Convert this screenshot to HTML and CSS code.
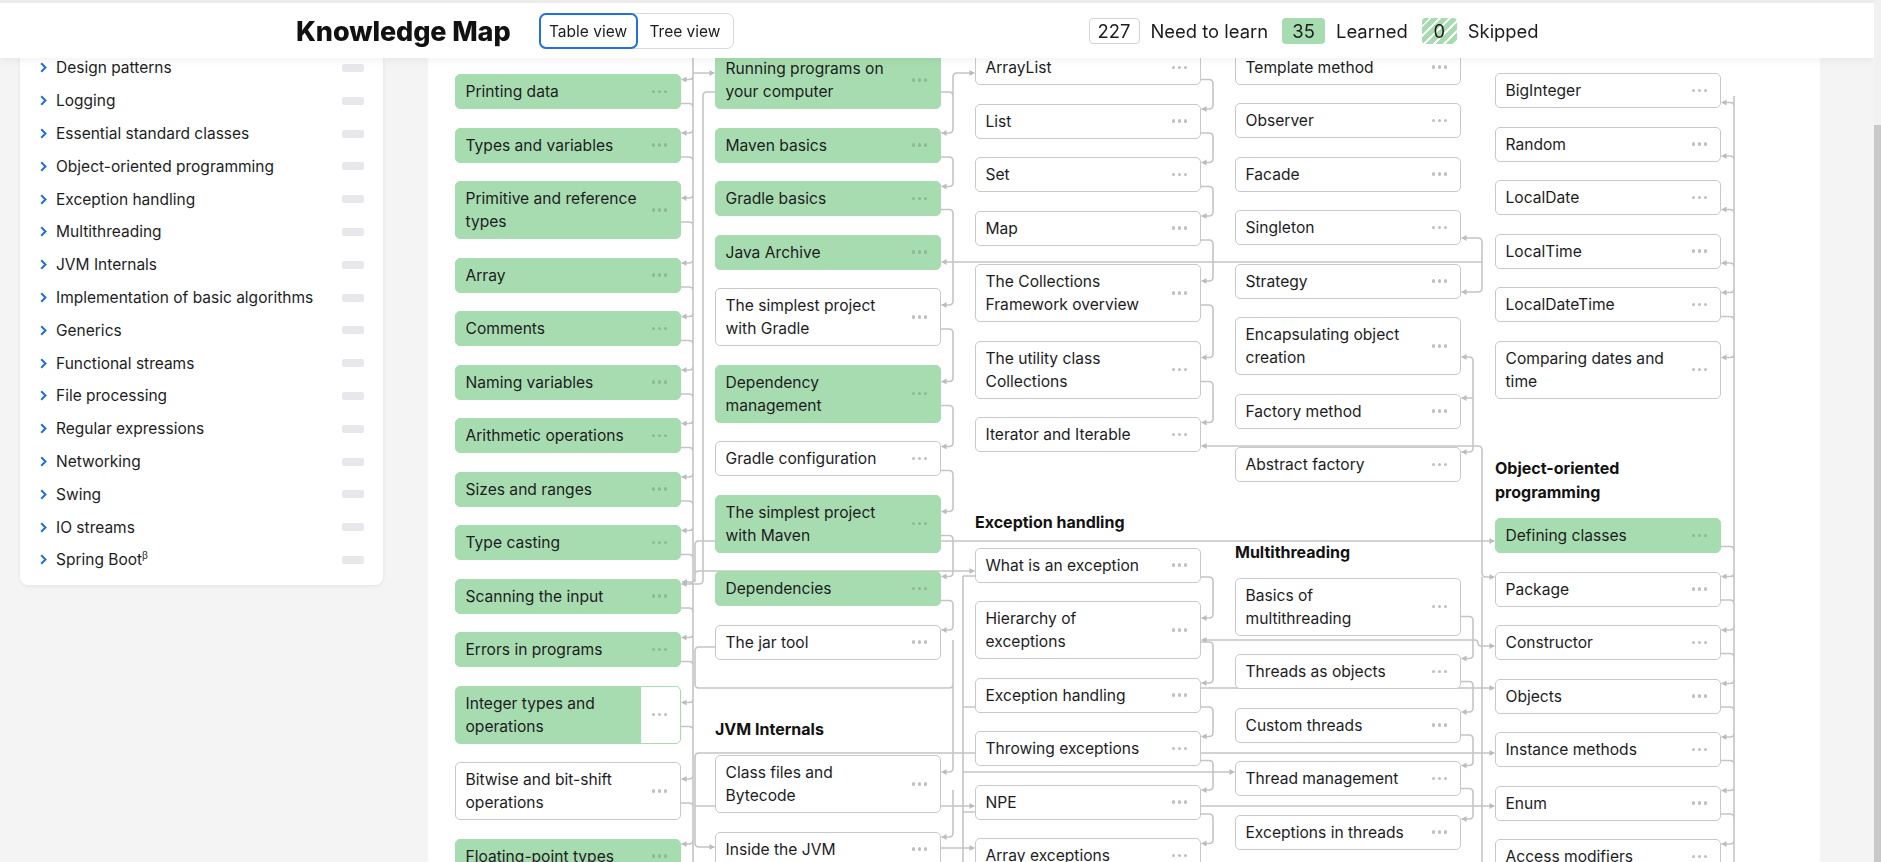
FILE: index.html
```html
<!DOCTYPE html>
<html lang="en">
<head>
<meta charset="utf-8">
<title>Knowledge Map</title>
<link rel="stylesheet" href="styles.css">
</head>
<body>
<header class="topbar">
  <h1 class="title">Knowledge Map</h1>
  <div class="view-toggle">
    <button class="toggle-btn is-active">Table view</button>
    <button class="toggle-btn">Tree view</button>
  </div>
  <div class="stats">
    <span class="stat"><span class="badge badge-todo">227</span>Need to learn</span>
    <span class="stat"><span class="badge badge-learned">35</span>Learned</span>
    <span class="stat"><span class="badge badge-skipped">0</span>Skipped</span>
  </div>
</header>

<div class="scrollbar"><div class="scrollbar-thumb"></div></div>

<div class="page">
  <aside class="sidebar">
    <ul class="topic-list">
      <li class="topic"><svg class="chev" viewBox="0 0 7 11"><path d="M1.2 1.2 5.5 5.5 1.2 9.8"/></svg><span class="topic-name">Design patterns</span><span class="topic-bar"></span></li>
      <li class="topic"><svg class="chev" viewBox="0 0 7 11"><path d="M1.2 1.2 5.5 5.5 1.2 9.8"/></svg><span class="topic-name">Logging</span><span class="topic-bar"></span></li>
      <li class="topic"><svg class="chev" viewBox="0 0 7 11"><path d="M1.2 1.2 5.5 5.5 1.2 9.8"/></svg><span class="topic-name">Essential standard classes</span><span class="topic-bar"></span></li>
      <li class="topic"><svg class="chev" viewBox="0 0 7 11"><path d="M1.2 1.2 5.5 5.5 1.2 9.8"/></svg><span class="topic-name">Object-oriented programming</span><span class="topic-bar"></span></li>
      <li class="topic"><svg class="chev" viewBox="0 0 7 11"><path d="M1.2 1.2 5.5 5.5 1.2 9.8"/></svg><span class="topic-name">Exception handling</span><span class="topic-bar"></span></li>
      <li class="topic"><svg class="chev" viewBox="0 0 7 11"><path d="M1.2 1.2 5.5 5.5 1.2 9.8"/></svg><span class="topic-name">Multithreading</span><span class="topic-bar"></span></li>
      <li class="topic"><svg class="chev" viewBox="0 0 7 11"><path d="M1.2 1.2 5.5 5.5 1.2 9.8"/></svg><span class="topic-name">JVM Internals</span><span class="topic-bar"></span></li>
      <li class="topic"><svg class="chev" viewBox="0 0 7 11"><path d="M1.2 1.2 5.5 5.5 1.2 9.8"/></svg><span class="topic-name">Implementation of basic algorithms</span><span class="topic-bar"></span></li>
      <li class="topic"><svg class="chev" viewBox="0 0 7 11"><path d="M1.2 1.2 5.5 5.5 1.2 9.8"/></svg><span class="topic-name">Generics</span><span class="topic-bar"></span></li>
      <li class="topic"><svg class="chev" viewBox="0 0 7 11"><path d="M1.2 1.2 5.5 5.5 1.2 9.8"/></svg><span class="topic-name">Functional streams</span><span class="topic-bar"></span></li>
      <li class="topic"><svg class="chev" viewBox="0 0 7 11"><path d="M1.2 1.2 5.5 5.5 1.2 9.8"/></svg><span class="topic-name">File processing</span><span class="topic-bar"></span></li>
      <li class="topic"><svg class="chev" viewBox="0 0 7 11"><path d="M1.2 1.2 5.5 5.5 1.2 9.8"/></svg><span class="topic-name">Regular expressions</span><span class="topic-bar"></span></li>
      <li class="topic"><svg class="chev" viewBox="0 0 7 11"><path d="M1.2 1.2 5.5 5.5 1.2 9.8"/></svg><span class="topic-name">Networking</span><span class="topic-bar"></span></li>
      <li class="topic"><svg class="chev" viewBox="0 0 7 11"><path d="M1.2 1.2 5.5 5.5 1.2 9.8"/></svg><span class="topic-name">Swing</span><span class="topic-bar"></span></li>
      <li class="topic"><svg class="chev" viewBox="0 0 7 11"><path d="M1.2 1.2 5.5 5.5 1.2 9.8"/></svg><span class="topic-name">IO streams</span><span class="topic-bar"></span></li>
      <li class="topic"><svg class="chev" viewBox="0 0 7 11"><path d="M1.2 1.2 5.5 5.5 1.2 9.8"/></svg><span class="topic-name">Spring Boot<sup class="beta">β</sup></span><span class="topic-bar"></span></li>
    </ul>
  </aside>

  <main class="map-panel">
    <svg class="links" id="links" xmlns="http://www.w3.org/2000/svg"></svg>
    <div class="map">
      <div class="column col-first">
        <section class="section">
          <div class="nodes">
            <div class="node learned" id="n-printing"><span class="node-text">Printing data</span><span class="dots"><i></i><i></i><i></i></span></div>
            <div class="node learned" id="n-types"><span class="node-text">Types and variables</span><span class="dots"><i></i><i></i><i></i></span></div>
            <div class="node learned" id="n-primitive"><span class="node-text">Primitive and reference types</span><span class="dots"><i></i><i></i><i></i></span></div>
            <div class="node learned" id="n-array"><span class="node-text">Array</span><span class="dots"><i></i><i></i><i></i></span></div>
            <div class="node learned" id="n-comments"><span class="node-text">Comments</span><span class="dots"><i></i><i></i><i></i></span></div>
            <div class="node learned" id="n-naming"><span class="node-text">Naming variables</span><span class="dots"><i></i><i></i><i></i></span></div>
            <div class="node learned" id="n-arith"><span class="node-text">Arithmetic operations</span><span class="dots"><i></i><i></i><i></i></span></div>
            <div class="node learned" id="n-sizes"><span class="node-text">Sizes and ranges</span><span class="dots"><i></i><i></i><i></i></span></div>
            <div class="node learned" id="n-casting"><span class="node-text">Type casting</span><span class="dots"><i></i><i></i><i></i></span></div>
            <div class="node learned" id="n-scanning"><span class="node-text">Scanning the input</span><span class="dots"><i></i><i></i><i></i></span></div>
            <div class="node learned" id="n-errors"><span class="node-text">Errors in programs</span><span class="dots"><i></i><i></i><i></i></span></div>
            <div class="node partial" id="n-integer"><span class="node-text">Integer types and operations</span><span class="dots"><i></i><i></i><i></i></span></div>
            <div class="node" id="n-bitwise"><span class="node-text">Bitwise and bit-shift operations</span><span class="dots"><i></i><i></i><i></i></span></div>
            <div class="node learned" id="n-floating"><span class="node-text">Floating-point types</span><span class="dots"><i></i><i></i><i></i></span></div>
          </div>
        </section>
      </div>

      <div class="column col-second">
        <section class="section">
          <div class="nodes">
            <div class="node learned" id="n-running"><span class="node-text">Running programs on your computer</span><span class="dots"><i></i><i></i><i></i></span></div>
            <div class="node learned" id="n-maven"><span class="node-text">Maven basics</span><span class="dots"><i></i><i></i><i></i></span></div>
            <div class="node learned" id="n-gradlebasics"><span class="node-text">Gradle basics</span><span class="dots"><i></i><i></i><i></i></span></div>
            <div class="node learned" id="n-jararchive"><span class="node-text">Java Archive</span><span class="dots"><i></i><i></i><i></i></span></div>
            <div class="node" id="n-simplegradle"><span class="node-text">The simplest project with Gradle</span><span class="dots"><i></i><i></i><i></i></span></div>
            <div class="node learned" id="n-depmgmt"><span class="node-text">Dependency management</span><span class="dots"><i></i><i></i><i></i></span></div>
            <div class="node" id="n-gradleconf"><span class="node-text">Gradle configuration</span><span class="dots"><i></i><i></i><i></i></span></div>
            <div class="node learned" id="n-simplemaven"><span class="node-text">The simplest project with Maven</span><span class="dots"><i></i><i></i><i></i></span></div>
            <div class="node learned" id="n-dependencies"><span class="node-text">Dependencies</span><span class="dots"><i></i><i></i><i></i></span></div>
            <div class="node" id="n-jar"><span class="node-text">The jar tool</span><span class="dots"><i></i><i></i><i></i></span></div>
          </div>
        </section>
        <section class="section">
          <h2 class="section-title">JVM Internals</h2>
          <div class="nodes">
            <div class="node" id="n-classfiles"><span class="node-text">Class files and Bytecode</span><span class="dots"><i></i><i></i><i></i></span></div>
            <div class="node" id="n-insidejvm"><span class="node-text">Inside the JVM</span><span class="dots"><i></i><i></i><i></i></span></div>
          </div>
        </section>
      </div>

      <div class="column col-third">
        <section class="section">
          <div class="nodes">
            <div class="node" id="n-arraylist"><span class="node-text">ArrayList</span><span class="dots"><i></i><i></i><i></i></span></div>
            <div class="node" id="n-list"><span class="node-text">List</span><span class="dots"><i></i><i></i><i></i></span></div>
            <div class="node" id="n-set"><span class="node-text">Set</span><span class="dots"><i></i><i></i><i></i></span></div>
            <div class="node" id="n-map"><span class="node-text">Map</span><span class="dots"><i></i><i></i><i></i></span></div>
            <div class="node" id="n-collections"><span class="node-text">The Collections Framework overview</span><span class="dots"><i></i><i></i><i></i></span></div>
            <div class="node" id="n-utility"><span class="node-text">The utility class Collections</span><span class="dots"><i></i><i></i><i></i></span></div>
            <div class="node" id="n-iterator"><span class="node-text">Iterator and Iterable</span><span class="dots"><i></i><i></i><i></i></span></div>
          </div>
        </section>
        <section class="section">
          <h2 class="section-title">Exception handling</h2>
          <div class="nodes">
            <div class="node" id="n-what"><span class="node-text">What is an exception</span><span class="dots"><i></i><i></i><i></i></span></div>
            <div class="node" id="n-hierarchy"><span class="node-text">Hierarchy of exceptions</span><span class="dots"><i></i><i></i><i></i></span></div>
            <div class="node" id="n-exch"><span class="node-text">Exception handling</span><span class="dots"><i></i><i></i><i></i></span></div>
            <div class="node" id="n-throwing"><span class="node-text">Throwing exceptions</span><span class="dots"><i></i><i></i><i></i></span></div>
            <div class="node" id="n-npe"><span class="node-text">NPE</span><span class="dots"><i></i><i></i><i></i></span></div>
            <div class="node" id="n-arrayexc"><span class="node-text">Array exceptions</span><span class="dots"><i></i><i></i><i></i></span></div>
          </div>
        </section>
      </div>

      <div class="column">
        <section class="section">
          <div class="nodes">
            <div class="node" id="n-template"><span class="node-text">Template method</span><span class="dots"><i></i><i></i><i></i></span></div>
            <div class="node" id="n-observer"><span class="node-text">Observer</span><span class="dots"><i></i><i></i><i></i></span></div>
            <div class="node" id="n-facade"><span class="node-text">Facade</span><span class="dots"><i></i><i></i><i></i></span></div>
            <div class="node" id="n-singleton"><span class="node-text">Singleton</span><span class="dots"><i></i><i></i><i></i></span></div>
            <div class="node" id="n-strategy"><span class="node-text">Strategy</span><span class="dots"><i></i><i></i><i></i></span></div>
            <div class="node" id="n-encaps"><span class="node-text">Encapsulating object creation</span><span class="dots"><i></i><i></i><i></i></span></div>
            <div class="node" id="n-factory"><span class="node-text">Factory method</span><span class="dots"><i></i><i></i><i></i></span></div>
            <div class="node" id="n-abstract"><span class="node-text">Abstract factory</span><span class="dots"><i></i><i></i><i></i></span></div>
          </div>
        </section>
        <section class="section">
          <h2 class="section-title">Multithreading</h2>
          <div class="nodes">
            <div class="node" id="n-basics"><span class="node-text">Basics of multithreading</span><span class="dots"><i></i><i></i><i></i></span></div>
            <div class="node" id="n-threads"><span class="node-text">Threads as objects</span><span class="dots"><i></i><i></i><i></i></span></div>
            <div class="node" id="n-custom"><span class="node-text">Custom threads</span><span class="dots"><i></i><i></i><i></i></span></div>
            <div class="node" id="n-threadmgmt"><span class="node-text">Thread management</span><span class="dots"><i></i><i></i><i></i></span></div>
            <div class="node" id="n-excthreads"><span class="node-text">Exceptions in threads</span><span class="dots"><i></i><i></i><i></i></span></div>
          </div>
        </section>
      </div>

      <div class="column col-fifth">
        <section class="section">
          <div class="nodes">
            <div class="node" id="n-bigint"><span class="node-text">BigInteger</span><span class="dots"><i></i><i></i><i></i></span></div>
            <div class="node" id="n-random"><span class="node-text">Random</span><span class="dots"><i></i><i></i><i></i></span></div>
            <div class="node" id="n-localdate"><span class="node-text">LocalDate</span><span class="dots"><i></i><i></i><i></i></span></div>
            <div class="node" id="n-localtime"><span class="node-text">LocalTime</span><span class="dots"><i></i><i></i><i></i></span></div>
            <div class="node" id="n-localdatetime"><span class="node-text">LocalDateTime</span><span class="dots"><i></i><i></i><i></i></span></div>
            <div class="node" id="n-comparing"><span class="node-text">Comparing dates and time</span><span class="dots"><i></i><i></i><i></i></span></div>
          </div>
        </section>
        <section class="section">
          <h2 class="section-title">Object-oriented programming</h2>
          <div class="nodes">
            <div class="node learned" id="n-defining"><span class="node-text">Defining classes</span><span class="dots"><i></i><i></i><i></i></span></div>
            <div class="node" id="n-package"><span class="node-text">Package</span><span class="dots"><i></i><i></i><i></i></span></div>
            <div class="node" id="n-constructor"><span class="node-text">Constructor</span><span class="dots"><i></i><i></i><i></i></span></div>
            <div class="node" id="n-objects"><span class="node-text">Objects</span><span class="dots"><i></i><i></i><i></i></span></div>
            <div class="node" id="n-instance"><span class="node-text">Instance methods</span><span class="dots"><i></i><i></i><i></i></span></div>
            <div class="node" id="n-enum"><span class="node-text">Enum</span><span class="dots"><i></i><i></i><i></i></span></div>
            <div class="node" id="n-access"><span class="node-text">Access modifiers</span><span class="dots"><i></i><i></i><i></i></span></div>
          </div>
        </section>
      </div>
    </div>
  </main>
</div>
<script src="app.js"></script>
</body>
</html>
```
FILE: styles.css
```css
* { box-sizing: border-box; }
html, body { margin: 0; height: 100%; }
body {
  background: #f4f4f4;
  font-family: Inter, "Liberation Sans", Arial, sans-serif;
  color: #1d1d1f;
  overflow: hidden;
}

/* ---------- top bar ---------- */
.topbar {
  position: fixed;
  top: 0;
  left: 0;
  width: 1874px;
  height: 58px;
  background: #fff;
  border-top: 3px solid #ececec;
  display: flex;
  align-items: center;
  padding: 1px 0 0 296px;
  box-shadow: 0 3px 8px rgba(0, 0, 0, 0.05);
  z-index: 10;
}
.title {
  margin: 0;
  font-size: 27px;
  font-weight: 800;
  letter-spacing: -0.1px;
  color: #111;
}
.view-toggle {
  margin-left: 28px;
  display: flex;
  height: 36px;
  border: 1px solid #d9d9d9;
  border-radius: 7px;
}
.toggle-btn {
  font: inherit;
  font-size: 15.5px;
  color: #1d1d1f;
  background: transparent;
  border: 0;
  padding: 0;
  width: 95px;
  cursor: pointer;
}
.toggle-btn.is-active {
  width: 99px;
  margin: -1px 0 -1px -1px;
  border: 2px solid #2270e3;
  border-radius: 7px;
}
.stats {
  margin-left: 355px;
  display: flex;
  align-items: center;
  gap: 14px;
  font-size: 18.4px;
}
.stat { display: flex; align-items: center; gap: 11px; }
.badge {
  height: 26px;
  display: inline-flex;
  align-items: center;
  justify-content: center;
  border-radius: 4px;
}
.badge-todo { width: 51px; border: 1px solid #d4d4d4; background: #fff; }
.badge-learned { width: 43px; background: #a7dcb0; }
.badge-skipped {
  width: 35px;
  background: repeating-linear-gradient(135deg, #a7dcb0 0 5px, #fff 5px 7px);
}

/* ---------- fake scrollbar ---------- */
.scrollbar {
  position: fixed;
  top: 0;
  right: 0;
  width: 7px;
  height: 100%;
  background: #f1f1f1;
  z-index: 11;
}
.scrollbar-thumb {
  margin-top: 125px;
  height: 737px;
  background: #c9c9c9;
}

/* ---------- page layout ---------- */
.page {
  display: flex;
  align-items: flex-start;
  gap: 45px;
  padding-left: 20px;
  height: 862px;
}

/* ---------- sidebar ---------- */
.sidebar {
  width: 363px;
  flex: none;
  background: #fff;
  border-radius: 0 0 8px 8px;
  box-shadow: 0 1px 4px rgba(0, 0, 0, 0.07);
  padding: 51.6px 0 8.6px;
}
.topic-list { list-style: none; margin: 0; padding: 0; }
.topic {
  display: flex;
  align-items: center;
  height: 32.8px;
  padding: 0 19px 0 20px;
  font-size: 15.5px;
  color: #1d1d1f;
}
.chev {
  width: 7px;
  height: 11px;
  flex: none;
  margin-right: 9px;
  fill: none;
  stroke: #1f6fe0;
  stroke-width: 2;
}
.topic-name { flex: 1; white-space: nowrap; }
.beta { font-size: 10px; vertical-align: 6px; line-height: 0; }
.topic-bar {
  width: 22px;
  height: 8px;
  border-radius: 2px;
  background: #e6e8eb;
}

/* ---------- map panel ---------- */
.map-panel {
  position: relative;
  width: 1392px;
  height: 862px;
  flex: none;
  background: #fff;
  overflow: hidden;
}
.links {
  position: absolute;
  left: 0;
  top: 0;
  width: 1392px;
  height: 862px;
  z-index: 0;
}
.link-line { fill: none; stroke: #c5c5c5; stroke-width: 1.6; }
.link-arrow { fill: #bcbcbc; }

.map {
  position: relative;
  z-index: 1;
  display: flex;
  align-items: flex-start;
  gap: 34px;
  padding: 49.5px 0 0 27px;
}
.column { width: 226px; flex: none; display: flex; flex-direction: column; }
.col-first { padding-top: 24.5px; }
.col-second { padding-top: 1.5px; }
.col-third { padding-top: 0.5px; }
.col-fifth { padding-top: 23.5px; }

.section + .section { margin-top: 57.5px; }
.section-title {
  margin: 0 0 14px;
  font-size: 16px;
  font-weight: 700;
  line-height: 24px;
  color: #121212;
}
.nodes { display: flex; flex-direction: column; gap: 18.5px; }

.node {
  display: flex;
  align-items: center;
  gap: 12.5px;
  min-height: 35px;
  padding: 5px 13px 5px 9.5px;
  border: 1px solid #c9c9c9;
  border-radius: 5px;
  background: #fff;
  font-size: 15.6px;
  line-height: 23px;
  color: #1d1d1f;
}
.node.learned { background: #a7dcb0; border-color: #a7dcb0; }
.node.partial {
  background: linear-gradient(90deg, #a7dcb0 82.6%, #fff 82.6%);
  border-color: #a7dcb0;
}
.node-text { flex: 1; }
.dots { display: flex; gap: 2.5px; flex: none; }
.dots i { width: 3.5px; height: 3.5px; border-radius: 50%; background: #c0c0c0; }
.node.learned .dots i { background: #8fb896; }
```
FILE: app.js
```js
(function () {
  var panel = document.querySelector('.map-panel');
  var svg = document.getElementById('links');
  var P = panel.getBoundingClientRect();
  var lines = '', arrows = '';

  function R(id) { return document.getElementById('n-' + id).getBoundingClientRect(); }
  function cy(id) { var r = R(id); return (r.top + r.bottom) / 2; }
  function rx(id) { return R(id).right; }
  function lx(id) { return R(id).left; }

  function dedupe(pts) {
    var out = [pts[0]];
    for (var i = 1; i < pts.length; i++) {
      var a = out[out.length - 1];
      if (Math.abs(a[0] - pts[i][0]) > 0.01 || Math.abs(a[1] - pts[i][1]) > 0.01) out.push(pts[i]);
    }
    return out;
  }
  function X(x) { return (x - P.left).toFixed(2); }
  function Y(y) { return (y - P.top).toFixed(2); }

  function arrow(from, to) {
    var dx = Math.sign(to[0] - from[0]), dy = Math.sign(to[1] - from[1]);
    var L = 5, W = 3;
    var bx = to[0] - dx * L, by = to[1] - dy * L;
    var px = -dy * W, py = dx * W;
    arrows += 'M' + X(to[0]) + ' ' + Y(to[1]) + ' L' + X(bx + px) + ' ' + Y(by + py) + ' L' + X(bx - px) + ' ' + Y(by - py) + ' Z ';
  }

  function poly(pts, opt) {
    opt = opt || {};
    pts = dedupe(pts);
    var r = 4;
    var s = 'M' + X(pts[0][0]) + ' ' + Y(pts[0][1]);
    for (var i = 1; i < pts.length - 1; i++) {
      var a = pts[i - 1], b = pts[i], c = pts[i + 1];
      var l1 = Math.hypot(b[0] - a[0], b[1] - a[1]);
      var l2 = Math.hypot(c[0] - b[0], c[1] - b[1]);
      var rr = Math.min(r, l1 / 2, l2 / 2);
      var p1 = [b[0] - (b[0] - a[0]) / l1 * rr, b[1] - (b[1] - a[1]) / l1 * rr];
      var p2 = [b[0] + (c[0] - b[0]) / l2 * rr, b[1] + (c[1] - b[1]) / l2 * rr];
      s += ' L' + X(p1[0]) + ' ' + Y(p1[1]) + ' Q' + X(b[0]) + ' ' + Y(b[1]) + ' ' + X(p2[0]) + ' ' + Y(p2[1]);
    }
    var last = pts[pts.length - 1];
    s += ' L' + X(last[0]) + ' ' + Y(last[1]);
    lines += s + ' ';
    if (opt.end !== false) arrow(pts[pts.length - 2], last);
    if (opt.start) arrow(pts[1], pts[0]);
  }

  function edge(a, as, ady, b, bs, bdy, vx, opt) {
    var ya = cy(a) + ady, yb = cy(b) + bdy;
    var xa = as === 'r' ? rx(a) : lx(a);
    var xb = bs === 'r' ? rx(b) + 0.5 : lx(b) - 0.5;
    poly([[xa, ya], [vx, ya], [vx, yb], [xb, yb]], opt);
  }
  function chain(ids, vx, inDy, outDy) {
    inDy = inDy === undefined ? -12 : inDy;
    outDy = outDy === undefined ? 12 : outDy;
    for (var i = 0; i < ids.length - 1; i++) edge(ids[i], 'r', outDy, ids[i + 1], 'r', inDy, vx);
  }
  function inR(id, dy, vx, fromY) { var y = cy(id) + dy; poly([[vx, fromY], [vx, y], [rx(id) + 0.5, y]]); }

  /* column 1 */
  poly([[693, 50], [693, 862]], { end: false });
  chain(['printing', 'types', 'primitive', 'array', 'comments', 'naming', 'arith', 'sizes', 'casting', 'scanning', 'errors', 'integer', 'bitwise', 'floating'], 693);
  inR('printing', -12, 693, 60);
  edge('running', 'l', 12, 'scanning', 'r', -12, 703);
  poly([[693, 73], [lx('running') - 0.5, 73]]);
  poly([[lx('defining') - 0.5, 541], [695, 541], [695, 582], [682, 582]], { start: true });
  poly([[lx('what') - 0.5, 571], [695, 571], [695, 582]], { start: true, end: false });

  /* column 2 */
  chain(['running', 'maven', 'gradlebasics'], 953);
  edge('gradlebasics', 'r', 11, 'simplegradle', 'r', -12, 953);
  chain(['simplegradle', 'depmgmt', 'gradleconf', 'simplemaven', 'dependencies', 'jar'], 953);
  inR('classfiles', -12, 953, 640);
  inR('insidejvm', -12, 953, 790);
  poly([[953, 95], [953, 73], [lx('arraylist') - 0.5, 73]]);
  poly([[lx('jar'), 647], [695, 647], [695, 688], [953, 688], [953, 660]], { end: false });
  poly([[lx('instance') - 0.5, 753], [695, 753], [695, 847], [lx('insidejvm') - 0.5, 847]], { start: true });
  poly([[lx('classfiles'), 806], [695, 806]], { end: false });
  poly([[rx('classfiles'), 806], [lx('npe') - 0.5, 806]]);
  poly([[rx('insidejvm'), 848], [lx('arrayexc') - 0.5, 848]]);
  poly([[963, 576], [963, 862]], { end: false });

  /* long line from Java Archive */
  poly([[1482, 262], [rx('jararchive') + 0.5, 262]]);
  poly([[1482, 262], [1482, 238], [rx('singleton') + 0.5, 238]]);
  poly([[1482, 262], [1482, 292], [rx('strategy') + 0.5, 292]]);

  /* column 3 */
  chain(['arraylist', 'list', 'set', 'map', 'collections', 'utility', 'iterator'], 1213);
  chain(['what', 'hierarchy', 'exch', 'throwing', 'npe', 'arrayexc'], 1213);
  poly([[rx('iterator') + 0.5, 446], [1482, 446], [1482, 577], [lx('package') - 0.5, 577]], { start: true });
  poly([[1482, 577], [1482, 862]], { end: false });
  poly([[lx('what'), 576], [963, 576]], { end: false });
  poly([[lx('exch'), 707], [963, 707]], { end: false });
  poly([[lx('npe'), 812], [963, 812]], { end: false });
  poly([[rx('hierarchy') + 0.5, 640], [1478, 640], [1478, 646], [lx('constructor') - 0.5, 646]], { start: true });
  poly([[rx('exch'), 688], [lx('objects') - 0.5, 688]]);
  poly([[rx('npe'), 806], [lx('enum') - 0.5, 806]]);
  poly([[963, 772], [lx('threadmgmt') - 0.5, 772]]);

  /* column 4 */
  poly([[rx('encaps') + 0.5, 357], [1473, 357], [1473, 452], [rx('abstract') + 0.5, 452]], { start: true });
  poly([[1473, 398], [rx('factory') + 0.5, 398]]);
  chain(['basics', 'threads', 'custom', 'threadmgmt', 'excthreads'], 1473, -13, 10);

  /* column 5 */
  poly([[1734, 96], [1734, 862]], { end: false });
  ['bigint', 'random', 'localdate', 'localtime'].forEach(function (id) { inR(id, 12, 1734, cy(id) + 24); });
  inR('localdatetime', -12, 1734, cy('localdatetime') - 24);
  edge('localdatetime', 'r', 12, 'comparing', 'r', -12, 1734);
  chain(['defining', 'package', 'constructor', 'objects', 'instance', 'enum', 'access'], 1734, -12.5, 11);

  svg.innerHTML = '<path class="link-line" d="' + lines + '"/><path class="link-arrow" d="' + arrows + '"/>';
})();
```
